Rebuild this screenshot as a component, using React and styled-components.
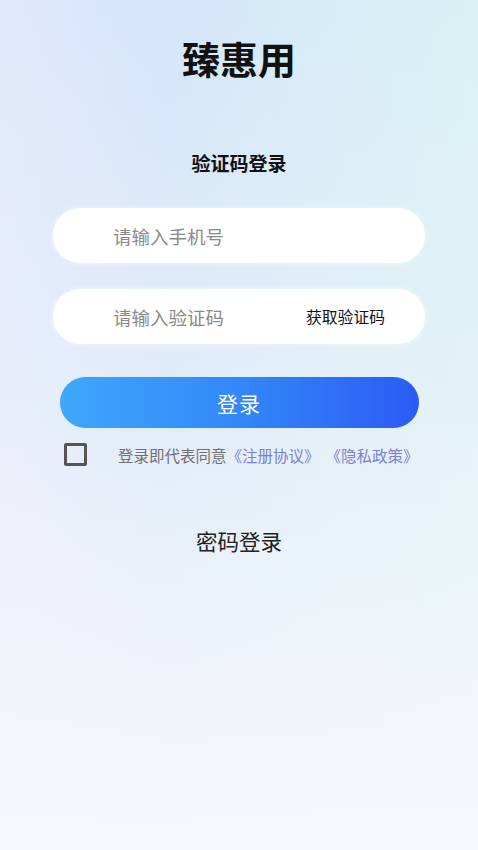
import React from 'react'
import styled, { createGlobalStyle } from 'styled-components'

const GlobalStyle = createGlobalStyle`
  html, body {
    margin: 0;
    padding: 0;
  }
  body {
    font-family: "Noto Sans CJK SC", "Noto Sans", sans-serif;
  }
`

const Page = styled.div`
  min-height: 850px;
  display: flex;
  flex-direction: column;
  align-items: center;
  background:
    linear-gradient(180deg, rgba(246,247,251,0) 0%, rgba(240,243,250,0.45) 45%, #f7f8fb 100%),
    linear-gradient(90deg, #e1e8fb 0%, #d4e5f9 35%, #d7ecf7 70%, #d8f1f4 100%);
`

const Title = styled.h1`
  margin: 36px 0 0;
  font-size: 38px;
  line-height: 44px;
  font-weight: 700;
  color: #111;
`

const Subtitle = styled.h2`
  margin: 70px 0 0;
  font-size: 19px;
  line-height: 26px;
  font-weight: 700;
  color: #111;
`

const Form = styled.div`
  width: 372px;
  margin-top: 32px;
  display: flex;
  flex-direction: column;
  gap: 26px;
`

const Field = styled.div`
  height: 55px;
  border-radius: 28px;
  background: #fff;
  display: flex;
  align-items: center;
  padding: 0 40px 0 60px;
  box-shadow: 0 0 6px rgba(255, 255, 255, 0.6);
`

const Input = styled.input`
  flex: 1;
  min-width: 0;
  border: none;
  outline: none;
  background: transparent;
  font-family: inherit;
  font-size: 18.5px;
  color: #333;
  padding: 0;
  &::placeholder {
    color: #8a8a8a;
  }
`

const CodeLink = styled.span`
  font-size: 15.8px;
  color: #111;
  white-space: nowrap;
`

const LoginButton = styled.button`
  width: 359px;
  height: 51px;
  margin-top: 33px;
  border: none;
  border-radius: 26px;
  background: linear-gradient(90deg, #3ea8fb 0%, #3387f8 50%, #2a5bf5 100%);
  color: #fff;
  font-family: inherit;
  font-size: 21px;
  letter-spacing: 1px;
  cursor: pointer;
`

const Agreement = styled.div`
  width: 350px;
  margin-top: 15px;
  display: flex;
  align-items: center;
  font-size: 15.5px;
  color: #707070;
  white-space: nowrap;
`

const Checkbox = styled.span`
  width: 17px;
  height: 17px;
  border: 3px solid #555;
  border-radius: 2px;
  flex-shrink: 0;
  margin-right: 31px;
`

const Link = styled.span`
  color: #7b7fd6;
  & + & {
    margin-left: 6px;
  }
`

const SwitchMode = styled.div`
  margin-top: 59px;
  font-size: 21.5px;
  color: #222;
`

export default function App() {
  return (
    <>
      <GlobalStyle />
      <Page>
        <Title>臻惠用</Title>
        <Subtitle>验证码登录</Subtitle>
        <Form>
          <Field>
            <Input placeholder="请输入手机号" />
          </Field>
          <Field>
            <Input placeholder="请输入验证码" />
            <CodeLink>获取验证码</CodeLink>
          </Field>
        </Form>
        <LoginButton>登录</LoginButton>
        <Agreement>
          <Checkbox />
          登录即代表同意
          <Link>《注册协议》</Link>
          <Link>《隐私政策》</Link>
        </Agreement>
        <SwitchMode>密码登录</SwitchMode>
      </Page>
    </>
  )
}
